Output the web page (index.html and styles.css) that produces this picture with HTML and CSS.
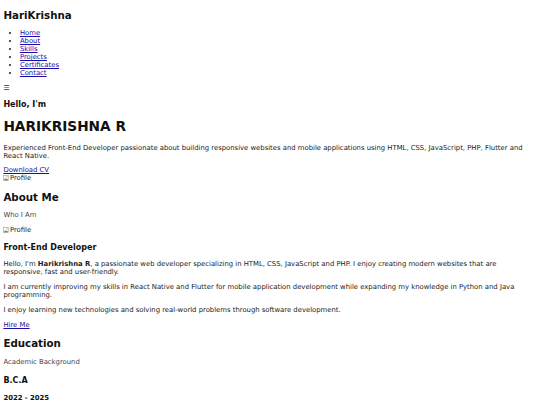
FILE: index.html
```html
<!DOCTYPE html>
<html lang="en">
<head>
<meta charset="utf-8">
<title>HariKrishna</title>
<link rel="stylesheet" href="styles.css">
</head>
<body>
<header class="site-header">
  <h2 class="logo">HariKrishna</h2>
  <nav class="nav">
    <ul class="nav-list">
      <li><a href="#home">Home</a></li>
      <li><a href="#about">About</a></li>
      <li><a href="#skills">Skills</a></li>
      <li><a href="#projects">Projects</a></li>
      <li><a href="#certificates">Certificates</a></li>
      <li><a href="#contact">Contact</a></li>
    </ul>
  </nav>
  <div class="menu-toggle">&#9776;</div>
</header>

<section class="hero" id="home">
  <h3 class="hero-hello">Hello, I'm</h3>
  <h1 class="hero-name">HARIKRISHNA R</h1>
  <p class="hero-text">Experienced Front-End Developer passionate about building responsive websites and mobile applications using HTML, CSS, JavaScript, PHP, Flutter and React Native.</p>
  <a href="#" class="btn">Download CV</a>
  <div class="pic"><svg class="pic-icon" viewBox="0 0 8 8" width="6" height="6"><rect x="0.5" y="0.5" width="6.5" height="7" fill="#fff" stroke="#9a9a9a" stroke-width="0.8"/><path d="M1 7 L3 4.2 L4.4 5.6 L5.4 4.6 L7 7 Z" fill="#4a9a3a"/><circle cx="5.2" cy="2.4" r="0.9" fill="#6aa7d8"/></svg>Profile</div>
</section>

<section class="about" id="about">
  <h2>About Me</h2>
  <p class="subtitle">Who I Am</p>
  <div class="about-img"><span class="pic"><svg class="pic-icon" viewBox="0 0 8 8" width="6" height="6"><rect x="0.5" y="0.5" width="6.5" height="7" fill="#fff" stroke="#9a9a9a" stroke-width="0.8"/><path d="M1 7 L3 4.2 L4.4 5.6 L5.4 4.6 L7 7 Z" fill="#4a9a3a"/><circle cx="5.2" cy="2.4" r="0.9" fill="#6aa7d8"/></svg>Profile</span></div>
  <h3>Front-End Developer</h3>
  <p>Hello, I'm <strong>Harikrishna R</strong>, a passionate web developer specializing in HTML, CSS, JavaScript and PHP. I enjoy creating modern websites that are responsive, fast and user-friendly.</p>
  <p>I am currently improving my skills in React Native and Flutter for mobile application development while expanding my knowledge in Python and Java programming.</p>
  <p>I enjoy learning new technologies and solving real-world problems through software development.</p>
  <a href="#contact" class="btn">Hire Me</a>
</section>

<section class="education" id="education">
  <h2>Education</h2>
  <p class="subtitle">Academic Background</p>
  <h3 class="edu-title">B.C.A</h3>
  <h4 class="edu-years">2022 - 2025</h4>
</section>
</body>
</html>
```
FILE: styles.css
```css
html {
  background: #fff;
}

body {
  margin: 3.4px;
  font-family: "DejaVu Sans", Verdana, sans-serif;
  font-size: 6.85px;
  color: #222;
}

a {
  color: #1a0dab;
}

h1, h2, h3, h4 {
  color: #111;
}

.logo {
  margin-top: 5.5px;
}

.nav-list {
  padding-left: 16.5px;
}

.menu-toggle {
  color: #333;
}

.subtitle {
  color: #444;
}

.pic {
  display: inline-flex;
  align-items: center;
  gap: 0.5px;
}

.pic-icon {
  flex: none;
}

.hero .pic {
  display: flex;
}

.about-img {
  margin: 6.85px 0;
}

.edu-title {
  margin-top: 10px;
}
```
